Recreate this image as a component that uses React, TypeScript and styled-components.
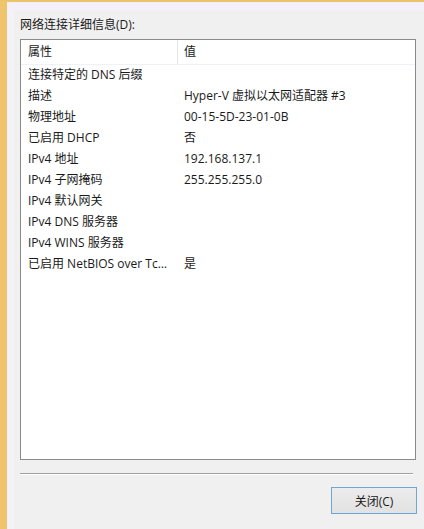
import React from 'react';
import styled, { createGlobalStyle } from 'styled-components';

const GlobalStyle = createGlobalStyle`
	html, body {
		margin: 0;
		padding: 0;
		background: #f0f0f0;
	}
	body {
		font-family: 'Open Sans', 'Noto Sans CJK SC', 'Microsoft YaHei', sans-serif;
		font-size: 12px;
		color: #1a1a1a;
	}
`;

const Frame = styled.div`
	width: 424px;
	height: 529px;
	box-sizing: border-box;
	border-top: 2px solid #eac36a;
	border-left: 7px solid #eec56c;
	overflow: hidden;
`;

const Glow = styled.div`
	height: 100%;
	box-sizing: border-box;
	border-top: 9px solid #f4eff8;
	border-left: 7px solid #f4f2f9;
	background: #f0f0f0;
	display: flex;
	flex-direction: column;
	padding: 6px 8px 0 6px;
`;

const Caption = styled.div`
	line-height: 16px;
	height: 16px;
	margin-bottom: 6px;
`;

const ListBox = styled.div`
	height: 421px;
	box-sizing: border-box;
	border: 1px solid #8a8a8a;
	background: #fff;
	display: flex;
	flex-direction: column;
`;

const Row = styled.div<{ header?: boolean }>`
	display: grid;
	grid-template-columns: 157px 1fr;
	height: ${({ header }) => (header ? '24px' : '21px')};
	line-height: ${({ header }) => (header ? '23px' : '20px')};
	${({ header }) => header && 'border-bottom: 1px solid #eef1f5;'}
`;

const Cell = styled.div<{ header?: boolean; first?: boolean }>`
	padding-left: ${({ first }) => (first ? '7px' : '6px')};
	padding-right: 4px;
	white-space: nowrap;
	overflow: hidden;
	text-overflow: ellipsis;
	${({ header, first }) => header && first && 'border-right: 1px solid #e5e5e5;'}
`;

const Separator = styled.div`
	height: 1px;
	background: #a0a0a0;
	border-bottom: 1px solid #fff;
	margin: 13px 3px 0 0;
`;

const Footer = styled.div`
	display: flex;
	justify-content: flex-end;
	padding-top: 12px;
	margin-right: -1px;
`;

const Button = styled.button`
	width: 86px;
	height: 27px;
	box-sizing: border-box;
	border: 1px solid #6fa6d8;
	background: linear-gradient(#ececec, #e2e2e2);
	font-family: inherit;
	font-size: 12px;
	color: #1a1a1a;
	padding: 0;
`;

const rows: Array<[string, string]> = [
	['连接特定的 DNS 后缀', ''],
	['描述', 'Hyper-V 虚拟以太网适配器 #3'],
	['物理地址', '00-15-5D-23-01-0B'],
	['已启用 DHCP', '否'],
	['IPv4 地址', '192.168.137.1'],
	['IPv4 子网掩码', '255.255.255.0'],
	['IPv4 默认网关', ''],
	['IPv4 DNS 服务器', ''],
	['IPv4 WINS 服务器', ''],
	['已启用 NetBIOS over Tcpip', '是']
];

const App = () => (
	<Frame>
		<GlobalStyle />
		<Glow>
			<Caption>网络连接详细信息(D):</Caption>
			<ListBox>
				<Row header>
					<Cell header first>
						属性
					</Cell>
					<Cell header>值</Cell>
				</Row>
				{rows.map(([k, v]) => (
					<Row key={k}>
						<Cell first>{k}</Cell>
						<Cell>{v}</Cell>
					</Row>
				))}
			</ListBox>
			<Separator />
			<Footer>
				<Button>关闭(C)</Button>
			</Footer>
		</Glow>
	</Frame>
);

export default App;
